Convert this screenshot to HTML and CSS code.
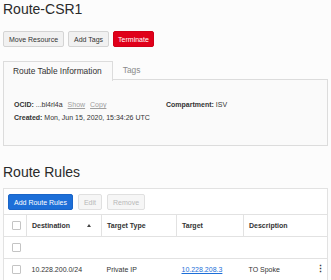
FILE: index.html
```html
<!DOCTYPE html>
<html lang="en">
<head>
  <meta charset="UTF-8" />
  <title>Route-CSR1</title>
  <link rel="stylesheet" href="styles.css">
</head>
<body>

  <div class="page">
    <h1 class="page-title">Route-CSR1</h1>

    <div class="actions">
      <button class="btn">Move Resource</button>
      <button class="btn">Add Tags</button>
      <button class="btn btn-danger">Terminate</button>
    </div>

    <div class="tabs">
      <div class="tab active">Route Table Information</div>
      <div class="tab">Tags</div>
    </div>

    <div class="tab-panel">
      <div class="info-grid">
        <div class="info-item">
          <b>OCID:</b> ...bl4rl4a
          <a class="muted-link" href="#">Show</a>
          <a class="muted-link" href="#">Copy</a>
        </div>
        <div class="info-item"><b>Compartment:</b> ISV</div>
        <div class="info-item"><b>Created:</b> Mon, Jun 15, 2020, 15:34:26 UTC</div>
      </div>
    </div>

    <h2 class="section-title">Route Rules</h2>

    <div class="table-box">
      <div class="toolbar">
        <button class="btn btn-primary">Add Route Rules</button>
        <button class="btn" disabled>Edit</button>
        <button class="btn" disabled>Remove</button>
      </div>

      <table class="rules">
        <thead>
          <tr>
            <th class="col-check"><span class="checkbox"></span></th>
            <th class="col-dest"><span class="sortable">Destination <span class="sort-arrow"></span></span></th>
            <th class="col-type">Target Type</th>
            <th class="col-target">Target</th>
            <th class="col-desc">Description</th>
          </tr>
        </thead>
        <tbody>
          <tr>
            <td class="col-check"><span class="checkbox"></span></td>
            <td colspan="4"></td>
          </tr>
          <tr>
            <td class="col-check"><span class="checkbox"></span></td>
            <td>10.228.200.0/24</td>
            <td>Private IP</td>
            <td><a class="link" href="#">10.228.208.3</a></td>
            <td><span class="desc-cell">TO Spoke <span class="kebab">&#8942;</span></span></td>
          </tr>
        </tbody>
      </table>
    </div>
  </div>

</body>
</html>
```

FILE: styles.css
```css
body {
  margin: 0;
  background-color: #fcfcfc;
  font-family: "Liberation Sans", Arial, sans-serif;
  color: #333;
  font-size: 7px;
}

.page {
  padding: 1px 3px 0 3px;
}

.page-title {
  margin: 0;
  font-size: 14px;
  font-weight: normal;
  line-height: 16px;
  color: #2a2a2a;
}

.actions {
  display: flex;
  gap: 4px;
  margin-top: 14px;
}

.btn {
  font-family: inherit;
  font-size: 7px;
  height: 16px;
  padding: 0 5px;
  background-color: #f1f1f1;
  border: 1px solid #d4d4d4;
  border-radius: 2px;
  color: #333;
  cursor: pointer;
}

.btn-danger {
  background-color: #e0001a;
  border-color: #d00018;
  color: white;
  padding: 0 4px;
}

.btn-primary {
  background-color: #1d6fd8;
  border-color: #1a65c8;
  color: white;
}

.btn:disabled {
  background-color: #f6f6f6;
  border-color: #e0e0e0;
  color: #b8b8b8;
  cursor: default;
}

.tabs {
  display: flex;
  width: 325px;
  box-sizing: border-box;
  margin-top: 14px;
  border-bottom: 1px solid #dcdcdc;
  height: 19px;
}

.tab {
  padding: 0 10px;
  font-size: 8.4px;
  line-height: 19px;
  color: #8a8a8a;
}

.tab.active {
  color: #333;
  background-color: #fafafa;
  border: 1px solid #dcdcdc;
  border-bottom: none;
  height: 19px;
  line-height: 18px;
  margin-bottom: -1px;
  padding: 0 10px 0 9px;
}

.tab-panel {
  background-color: #fafafa;
  border: 1px solid #dcdcdc;
  border-top: none;
  height: 66px;
  box-sizing: border-box;
  width: 325px;
  padding: 20px 10px 0 10px;
}

.info-grid {
  display: grid;
  grid-template-columns: 152px 1fr;
  row-gap: 4px;
  line-height: 9px;
}

.muted-link {
  color: #a0a0a0;
  margin-left: 3px;
}

.section-title {
  margin: 18px 0 0 0;
  font-size: 14px;
  font-weight: normal;
  line-height: 16px;
  color: #2a2a2a;
}

.table-box {
  margin-top: 8px;
  width: 325px;
  box-sizing: border-box;
  border: 1px solid #e2e2e2;
  border-bottom: none;
  background-color: white;
}

.toolbar {
  display: flex;
  gap: 5px;
  padding: 5px 4px 4px 4px;
}

.rules {
  width: 100%;
  border-collapse: collapse;
  table-layout: fixed;
}

.rules th,
.rules td {
  height: 21px;
  padding: 0 5px;
  border-top: 1px solid #e2e2e2;
  border-bottom: 1px solid #e2e2e2;
  text-align: left;
  white-space: nowrap;
}

.rules th {
  font-weight: bold;
  border-left: 1px solid #e2e2e2;
}

.rules th:first-child {
  border-left: none;
}

.col-check {
  width: 14px;
  text-align: center;
}

.rules .col-check {
  padding: 0 0 0 8px;
}

.col-dest { width: 64px; }
.col-type { width: 64px; }
.col-target { width: 56px; }

.checkbox {
  display: block;
  width: 7px;
  height: 7px;
  border: 1px solid #c4c4c4;
  border-radius: 1px;
  background-color: white;
}

.sortable {
  display: flex;
  justify-content: space-between;
  align-items: center;
  padding-right: 5px;
}

.sort-arrow {
  width: 0;
  height: 0;
  border-left: 2px solid transparent;
  border-right: 2px solid transparent;
  border-bottom: 3px solid #444;
}

.link {
  color: #1d6fd8;
}

.desc-cell {
  display: flex;
  justify-content: space-between;
}

.kebab {
  font-size: 9px;
  font-weight: bold;
  line-height: 7px;
  margin-right: -3px;
}
```
